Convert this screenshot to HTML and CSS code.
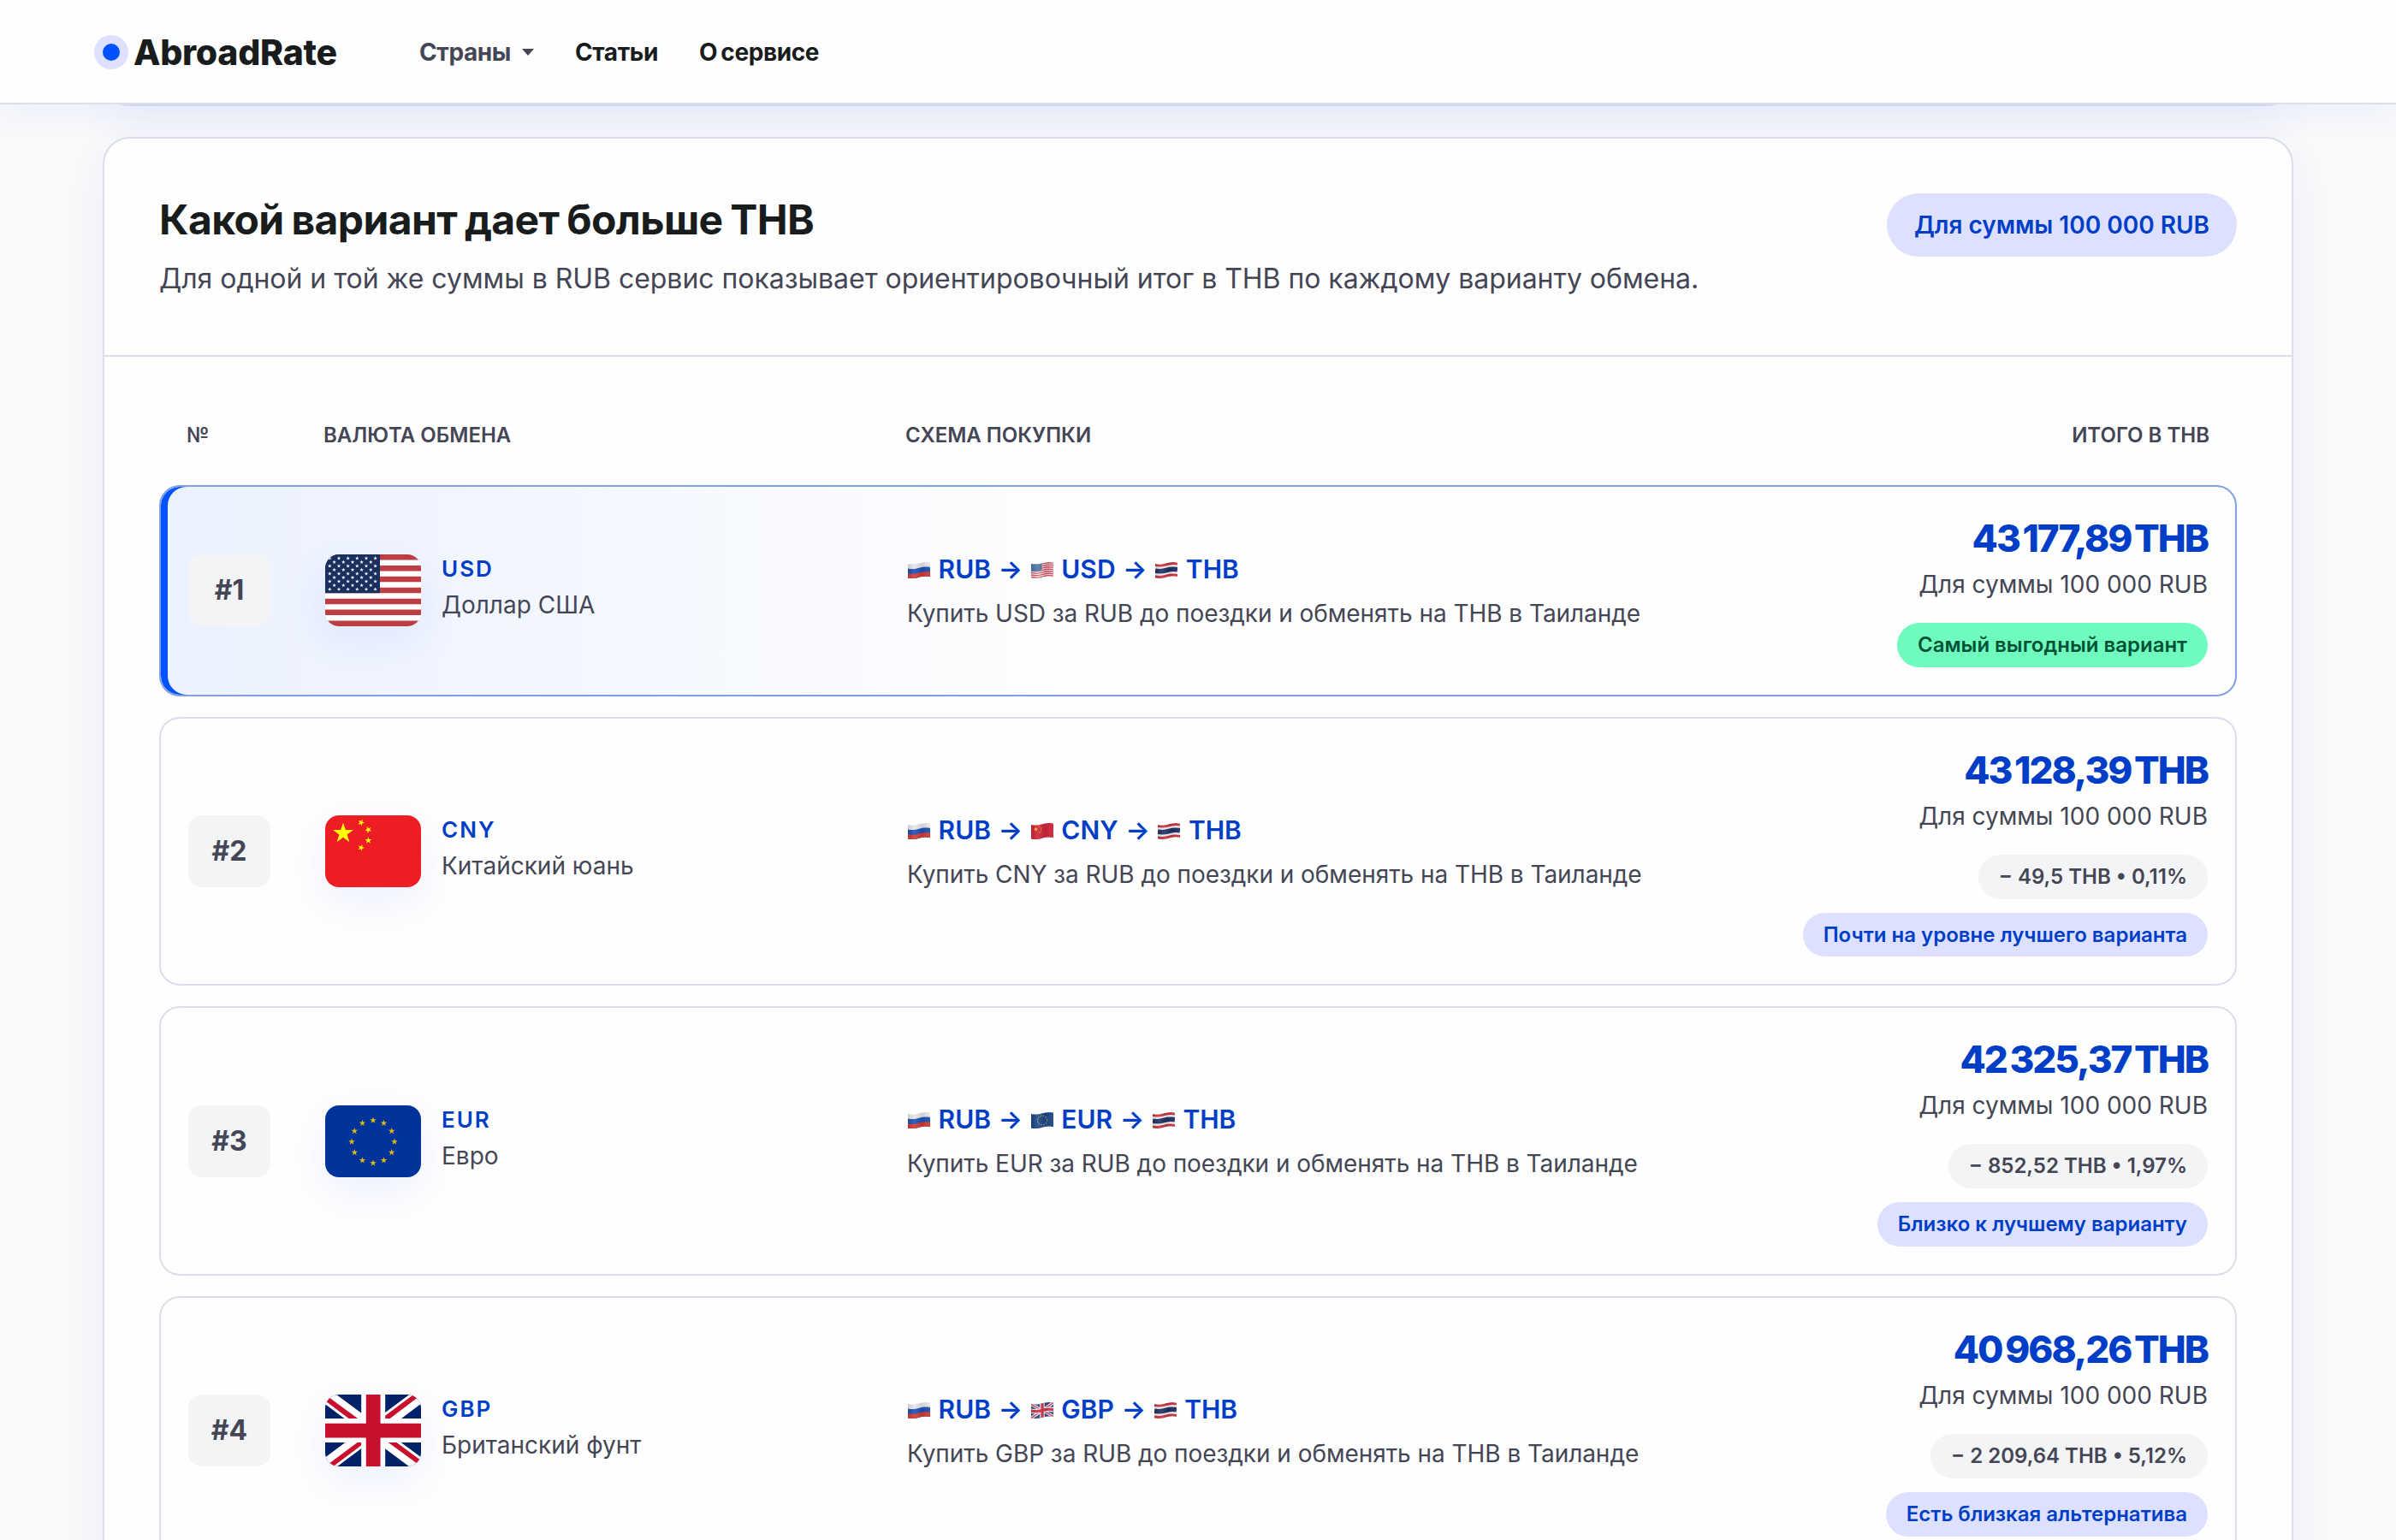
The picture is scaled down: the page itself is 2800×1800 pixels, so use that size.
FILE: index.html
```
<!DOCTYPE html>
<html lang="ru">
<head>
  <meta charset="UTF-8">
  <meta name="viewport" content="width=device-width, initial-scale=1">
  <title>AbroadRate</title>
  <link rel="stylesheet" href="styles.css">
</head>
<body>

<!-- Flags shared by all rows -->
<svg class="sprite" aria-hidden="true">
  <defs>
    <polygon id="star" points="0,-1 .2245,-.309 .951,-.309 .363,.118 .588,.809 0,.382 -.588,.809 -.363,.118 -.951,-.309 -.2245,-.309"/>
    <g id="stars6">
      <use href="#star" transform="translate(5.3,0) scale(2.4)"/>
      <use href="#star" transform="translate(16,0) scale(2.4)"/>
      <use href="#star" transform="translate(26.6,0) scale(2.4)"/>
      <use href="#star" transform="translate(37.3,0) scale(2.4)"/>
      <use href="#star" transform="translate(48,0) scale(2.4)"/>
      <use href="#star" transform="translate(58.6,0) scale(2.4)"/>
    </g>
    <g id="stars5">
      <use href="#star" transform="translate(10.6,0) scale(2.4)"/>
      <use href="#star" transform="translate(21.3,0) scale(2.4)"/>
      <use href="#star" transform="translate(32,0) scale(2.4)"/>
      <use href="#star" transform="translate(42.6,0) scale(2.4)"/>
      <use href="#star" transform="translate(53.3,0) scale(2.4)"/>
    </g>
    <linearGradient id="fold" x1="0" x2="1" y1="0" y2="0">
      <stop offset="0" stop-color="#000" stop-opacity=".12"/>
      <stop offset=".3" stop-color="#fff" stop-opacity=".1"/>
      <stop offset=".65" stop-color="#000" stop-opacity=".1"/>
      <stop offset="1" stop-color="#fff" stop-opacity=".05"/>
    </linearGradient>
    <clipPath id="wave">
      <path d="M0 2C5 3 9 2.500 13 1.300S21 -.5 26 .5V17C21 16 17 16.500 13 17.700S5 20 0 18.500Z"/>
    </clipPath>
    <symbol id="mini-ru" viewBox="0 0 26 19">
      <g clip-path="url(#wave)">
        <rect width="26" height="19" fill="#e6e6e8"/>
        <path d="M0 7.500C5 8.500 9 8 13 6.800S21 5 26 6V19H0Z" fill="#1d4fb4"/>
        <path d="M0 13.300C5 14.300 9 13.800 13 12.600S21 10.800 26 11.800V19H0Z" fill="#d23a33"/>
        <rect width="26" height="19" fill="url(#fold)"/>
      </g>
    </symbol>
    <symbol id="mini-us" viewBox="0 0 26 19">
      <g clip-path="url(#wave)">
        <rect width="26" height="19" fill="#f3e9ea"/>
        <g fill="none" stroke="#d4475a" stroke-width="1.300">
          <path d="M0 2.700C5 3.700 9 3.200 13 2S21 .2 26 1.200"/>
          <path d="M0 5.200C5 6.200 9 5.700 13 4.500S21 2.700 26 3.700"/>
          <path d="M0 7.700C5 8.700 9 8.200 13 7S21 5.200 26 6.200"/>
          <path d="M0 10.200C5 11.200 9 10.700 13 9.500S21 7.700 26 8.700"/>
          <path d="M0 12.700C5 13.700 9 13.200 13 12S21 10.200 26 11.200"/>
          <path d="M0 15.200C5 16.200 9 15.700 13 14.500S21 12.700 26 13.700"/>
          <path d="M0 17.700C5 18.700 9 18.200 13 17S21 15.200 26 16.200"/>
        </g>
        <path d="M0 0H12.500V9.200C8 11 4 11 0 10.500Z" fill="#4a78a8"/>
        <rect width="26" height="19" fill="url(#fold)"/>
      </g>
    </symbol>
    <symbol id="mini-cn" viewBox="0 0 26 19">
      <g clip-path="url(#wave)">
        <rect width="26" height="19" fill="#cf2338"/>
        <g fill="#fbd116">
          <use href="#star" transform="translate(5.500,7.300) scale(2.700)"/>
          <use href="#star" transform="translate(9.800,4) scale(1)"/>
          <use href="#star" transform="translate(11.500,6) scale(1)"/>
          <use href="#star" transform="translate(11.500,8.700) scale(1)"/>
          <use href="#star" transform="translate(9.800,11) scale(1)"/>
        </g>
        <rect width="26" height="19" fill="url(#fold)"/>
      </g>
    </symbol>
    <symbol id="mini-eu" viewBox="0 0 26 19">
      <g clip-path="url(#wave)">
        <rect width="26" height="19" fill="#1c4587"/>
        <circle cx="13" cy="9.500" r="5.500" fill="none" stroke="#c9b458" stroke-width="1.200" stroke-dasharray="1.200 1.680"/>
        <rect width="26" height="19" fill="url(#fold)"/>
      </g>
    </symbol>
    <symbol id="mini-gb" viewBox="0 0 26 19">
      <g clip-path="url(#wave)">
        <rect width="26" height="19" fill="#2d4a86"/>
        <path d="M0 2.500L26 16.500M26 .5L0 18.500" stroke="#f0e8ec" stroke-width="3.600"/>
        <path d="M0 2.500L26 16.500M26 .5L0 18.500" stroke="#cf3348" stroke-width="1.300"/>
        <path d="M13 0V19M0 10.200C5 11.200 9 10.700 13 9.500S21 7.700 26 8.700" fill="none" stroke="#f0e8ec" stroke-width="5.600"/>
        <path d="M13 0V19M0 10.200C5 11.200 9 10.700 13 9.500S21 7.700 26 8.700" fill="none" stroke="#cf3348" stroke-width="3.200"/>
        <rect width="26" height="19" fill="url(#fold)"/>
      </g>
    </symbol>
    <symbol id="mini-th" viewBox="0 0 26 19">
      <g clip-path="url(#wave)">
        <rect width="26" height="19" fill="#eeeef0"/>
        <path d="M0 3.500C5 4.500 9 4 13 2.800S21 1 26 2" fill="none" stroke="#c8313e" stroke-width="3"/>
        <path d="M0 10.200C5 11.200 9 10.700 13 9.500S21 7.700 26 8.700" fill="none" stroke="#1f2f63" stroke-width="5.600"/>
        <path d="M0 17C5 18 9 17.500 13 16.300S21 14.500 26 15.500" fill="none" stroke="#c8313e" stroke-width="3"/>
        <rect width="26" height="19" fill="url(#fold)"/>
      </g>
    </symbol>
  </defs>
</svg>

<header class="site-header">
  <a class="logo" href="#"><span class="logo-dot"></span>AbroadRate</a>
  <nav class="nav">
    <a class="nav-countries" href="#">Страны <span class="caret"></span></a>
    <a href="#">Статьи</a>
    <a href="#">О сервисе</a>
  </nav>
</header>

<main class="page">
  <section class="prev-card"></section>

  <section class="card">
    <div class="card-head">
      <div>
        <h2>Какой вариант дает больше THB</h2>
        <p>Для одной и той же суммы в RUB сервис показывает ориентировочный итог в THB по каждому варианту обмена.</p>
      </div>
      <span class="sum-pill">Для суммы 100 000 RUB</span>
    </div>

    <div class="rates">
      <div class="rates-head">
        <span>№</span>
        <span>Валюта обмена</span>
        <span>Схема покупки</span>
        <span class="right">Итого в THB</span>
      </div>

      <article class="rate best">
        <div class="rank">#1</div>
        <div class="currency">
          <svg class="flag" viewBox="0 0 112 84">
            <rect width="112" height="84" fill="#fff"/>
            <path d="M0 3.230H112M0 16.150H112M0 29.080H112M0 42H112M0 54.920H112M0 67.850H112M0 80.770H112" stroke="#bd3d44" stroke-width="6.460"/>
            <rect width="64" height="45.200" fill="#192f5d"/>
            <g fill="#fff">
              <use href="#stars6" y="4.500"/>
              <use href="#stars5" y="9"/>
              <use href="#stars6" y="13.600"/>
              <use href="#stars5" y="18.100"/>
              <use href="#stars6" y="22.600"/>
              <use href="#stars5" y="27.100"/>
              <use href="#stars6" y="31.600"/>
              <use href="#stars5" y="36.200"/>
              <use href="#stars6" y="40.700"/>
            </g>
          </svg>
          <div>
            <div class="code">USD</div>
            <div class="name">Доллар США</div>
          </div>
        </div>
        <div class="scheme">
          <div class="route"><svg><use href="#mini-ru"/></svg> RUB <span class="arrow">→</span> <svg><use href="#mini-us"/></svg> USD <span class="arrow">→</span> <svg><use href="#mini-th"/></svg> THB</div>
          <p>Купить USD за RUB до поездки и обменять на THB в Таиланде</p>
        </div>
        <div class="total">
          <div class="amount">43 177,89 THB</div>
          <div class="for-sum">Для суммы 100 000 RUB</div>
          <span class="chip chip-green">Самый выгодный вариант</span>
        </div>
      </article>

      <article class="rate">
        <div class="rank">#2</div>
        <div class="currency">
          <svg class="flag" viewBox="0 0 112 84">
            <rect width="112" height="84" fill="#ee1c25"/>
            <g fill="#ff0">
              <use href="#star" transform="translate(21,21) scale(12.600)"/>
              <use href="#star" transform="translate(42,8.400) rotate(23) scale(4.200)"/>
              <use href="#star" transform="translate(50.400,16.800) rotate(46) scale(4.200)"/>
              <use href="#star" transform="translate(50.400,29.400) rotate(0) scale(4.200)"/>
              <use href="#star" transform="translate(42,37.800) rotate(21) scale(4.200)"/>
            </g>
          </svg>
          <div>
            <div class="code">CNY</div>
            <div class="name">Китайский юань</div>
          </div>
        </div>
        <div class="scheme">
          <div class="route"><svg><use href="#mini-ru"/></svg> RUB <span class="arrow">→</span> <svg><use href="#mini-cn"/></svg> CNY <span class="arrow">→</span> <svg><use href="#mini-th"/></svg> THB</div>
          <p>Купить CNY за RUB до поездки и обменять на THB в Таиланде</p>
        </div>
        <div class="total">
          <div class="amount">43 128,39 THB</div>
          <div class="for-sum">Для суммы 100 000 RUB</div>
          <span class="chip">− 49,5 THB • 0,11%</span>
          <span class="chip chip-blue">Почти на уровне лучшего варианта</span>
        </div>
      </article>

      <article class="rate">
        <div class="rank">#3</div>
        <div class="currency">
          <svg class="flag" viewBox="0 0 112 84">
            <rect width="112" height="84" fill="#039"/>
            <g fill="#fc0" opacity=".9">
              <use href="#star" transform="translate(56,17.500) scale(4)"/>
              <use href="#star" transform="translate(68.500,20.800) scale(4)"/>
              <use href="#star" transform="translate(77.700,30) scale(4)"/>
              <use href="#star" transform="translate(81,42.500) scale(4)"/>
              <use href="#star" transform="translate(77.700,55) scale(4)"/>
              <use href="#star" transform="translate(68.500,64.200) scale(4)"/>
              <use href="#star" transform="translate(56,67.500) scale(4)"/>
              <use href="#star" transform="translate(43.500,64.200) scale(4)"/>
              <use href="#star" transform="translate(34.300,55) scale(4)"/>
              <use href="#star" transform="translate(31,42.500) scale(4)"/>
              <use href="#star" transform="translate(34.300,30) scale(4)"/>
              <use href="#star" transform="translate(43.500,20.800) scale(4)"/>
            </g>
          </svg>
          <div>
            <div class="code">EUR</div>
            <div class="name">Евро</div>
          </div>
        </div>
        <div class="scheme">
          <div class="route"><svg><use href="#mini-ru"/></svg> RUB <span class="arrow">→</span> <svg><use href="#mini-eu"/></svg> EUR <span class="arrow">→</span> <svg><use href="#mini-th"/></svg> THB</div>
          <p>Купить EUR за RUB до поездки и обменять на THB в Таиланде</p>
        </div>
        <div class="total">
          <div class="amount">42 325,37 THB</div>
          <div class="for-sum">Для суммы 100 000 RUB</div>
          <span class="chip">− 852,52 THB • 1,97%</span>
          <span class="chip chip-blue">Близко к лучшему варианту</span>
        </div>
      </article>

      <article class="rate">
        <div class="rank">#4</div>
        <div class="currency">
          <svg class="flag" viewBox="0 0 640 480">
            <path fill="#012169" d="M0 0h640v480H0z"/>
            <path fill="#FFF" d="m75 0 244 181L562 0h78v62L400 241l240 178v61h-80L320 301 81 480H0v-60l239-178L0 64V0z"/>
            <path fill="#C8102E" d="m424 281 216 159v40L369 281zm-184 20 6 35L54 480H0zM640 0v3L391 191l2-44L590 0zM0 0l239 176h-60L0 42z"/>
            <path fill="#FFF" d="M241 0v480h160V0zM0 160v160h640V160z"/>
            <path fill="#C8102E" d="M0 193v96h640v-96zM273 0v480h96V0z"/>
          </svg>
          <div>
            <div class="code">GBP</div>
            <div class="name">Британский фунт</div>
          </div>
        </div>
        <div class="scheme">
          <div class="route"><svg><use href="#mini-ru"/></svg> RUB <span class="arrow">→</span> <svg><use href="#mini-gb"/></svg> GBP <span class="arrow">→</span> <svg><use href="#mini-th"/></svg> THB</div>
          <p>Купить GBP за RUB до поездки и обменять на THB в Таиланде</p>
        </div>
        <div class="total">
          <div class="amount">40 968,26 THB</div>
          <div class="for-sum">Для суммы 100 000 RUB</div>
          <span class="chip">− 2 209,64 THB • 5,12%</span>
          <span class="chip chip-blue">Есть близкая альтернатива</span>
        </div>
      </article>
    </div>
  </section>
</main>

</body>
</html>
```
FILE: styles.css
```
* {
  box-sizing: border-box;
}
body {
  margin: 0;
  height: 1800px;
  overflow: hidden;
  font-family: Inter, sans-serif;
  background-color: #f8f9fa;
  color: #191c1d;
}
h2, p {
  margin: 0;
}
a {
  color: inherit;
  text-decoration: none;
}
.sprite {
  position: absolute;
  width: 0;
  height: 0;
}

/* Header */
.site-header {
  position: relative;
  z-index: 2;
  display: flex;
  align-items: center;
  height: 122px;
  padding-left: 120px;
  background-color: #fefefe;
  border-bottom: 2px solid #dcdfea;
  box-shadow: 0 8px 40px rgba(30, 80, 255, 0.06);
}
.logo {
  display: flex;
  align-items: center;
  gap: 16px;
  width: 370px;
  padding-top: 1px;
  font-size: 41px;
  font-weight: 800;
  letter-spacing: -0.3px;
}
.logo-dot {
  width: 20px;
  height: 20px;
  border-radius: 50%;
  background-color: #0052ff;
  box-shadow: 0 0 0 10px #dde1ff;
}
.nav {
  display: flex;
  gap: 48px;
  padding-top: 2px;
  font-size: 28px;
  font-weight: 700;
  letter-spacing: -0.4px;
  word-spacing: -2px;
}
.nav-countries {
  display: flex;
  align-items: center;
  gap: 13px;
  color: #444655;
}
.caret {
  border: 7px solid transparent;
  border-top: 8px solid #444655;
  border-bottom: none;
}

/* Cards */
.page {
  padding: 0 120px;
}
.prev-card {
  height: 40px;
  margin-top: -38px;
  border: 2px solid #d5dcec;
  border-radius: 0 0 32px 32px;
  background-color: #fff;
  box-shadow: 0 16px 48px rgba(20, 70, 230, 0.06);
}
.card {
  margin-top: 36px;
  height: 1900px;
  border: 2px solid #d9deea;
  border-radius: 32px;
  background-color: #fefefe;
  box-shadow: 0 16px 48px rgba(20, 70, 230, 0.05);
}
.card-head {
  display: flex;
  justify-content: space-between;
  align-items: flex-start;
  height: 255px;
  padding: 64px 64px 0;
  border-bottom: 2px solid #d9deea;
}
.card-head h2 {
  padding-top: 1px;
  font-size: 48px;
  line-height: 60px;
  font-weight: 700;
  letter-spacing: -0.6px;
  word-spacing: -2px;
}
.card-head p {
  margin-top: 13px;
  font-size: 32px;
  line-height: 52px;
  letter-spacing: -0.03px;
  color: #444655;
}
.sum-pill {
  padding: 0 32px;
  border-radius: 37px;
  background-color: #dde1ff;
  color: #003ec7;
  font-size: 28px;
  line-height: 74px;
  font-weight: 600;
}

/* Rates table */
.rates {
  display: flex;
  flex-direction: column;
  gap: 24px;
  padding: 64px;
}
.rates-head, .rate {
  display: grid;
  grid-template-columns: 96px 616px 900px 1fr;
  column-gap: 64px;
}
.rates-head {
  padding: 8px 32px 0;
  height: 62px;
  font-size: 24px;
  line-height: 40px;
  font-weight: 600;
  color: #444655;
  text-transform: uppercase;
}
.right {
  text-align: right;
}
.rate {
  position: relative;
  align-items: center;
  padding: 32px;
  border: 2px solid #d9deea;
  border-radius: 24px;
}
.rate.best {
  border-color: #80a0e3;
  background: linear-gradient(90deg, #ebf1ff 0, #fefefe 44%);
  box-shadow: inset 8px 0 0 #0052ff;
}
.rank {
  height: 84px;
  border-radius: 16px;
  background-color: #f3f4f5;
  color: #444655;
  font-size: 32px;
  line-height: 83px;
  font-weight: 700;
  text-align: center;
}
.currency {
  display: flex;
  align-items: center;
  gap: 24px;
}
.flag {
  width: 112px;
  height: 84px;
  border-radius: 16px;
  box-shadow: 0 16px 48px rgba(30, 80, 255, 0.08);
}
.code {
  font-size: 26px;
  line-height: 42px;
  font-weight: 600;
  letter-spacing: 2px;
  color: #003ec7;
}
.name {
  padding-bottom: 8px;
  font-size: 28px;
  line-height: 42px;
  color: #444655;
}
.route {
  font-size: 30px;
  line-height: 48px;
  font-weight: 600;
  color: #003ec7;
}
.route svg {
  width: 26px;
  height: 19px;
  margin: 0 2px 0 1px;
}
.arrow {
  margin: 0 1px;
}
.scheme p {
  margin-top: 5px;
  font-size: 28px;
  line-height: 46px;
  letter-spacing: -0.05px;
  color: #444655;
}
.total {
  display: flex;
  flex-direction: column;
  align-items: flex-end;
  white-space: nowrap;
}
.amount {
  font-size: 44px;
  line-height: 56px;
  font-weight: 800;
  letter-spacing: -2px;
  word-spacing: -4px;
  color: #003ec7;
}
.for-sum {
  margin-top: 3px;
  font-size: 28px;
  line-height: 46px;
  color: #444655;
}
.chip {
  margin-top: 16px;
  padding: 0 24px;
  border-radius: 26px;
  background-color: #f3f4f5;
  color: #444655;
  font-size: 24px;
  line-height: 51.8px;
  font-weight: 600;
}
.for-sum + .chip {
  margin-top: 22px;
}
.chip-green {
  background-color: #6ffbbe;
  color: #005236;
}
.chip-blue {
  background-color: #dde1ff;
  color: #003ec7;
}
```
